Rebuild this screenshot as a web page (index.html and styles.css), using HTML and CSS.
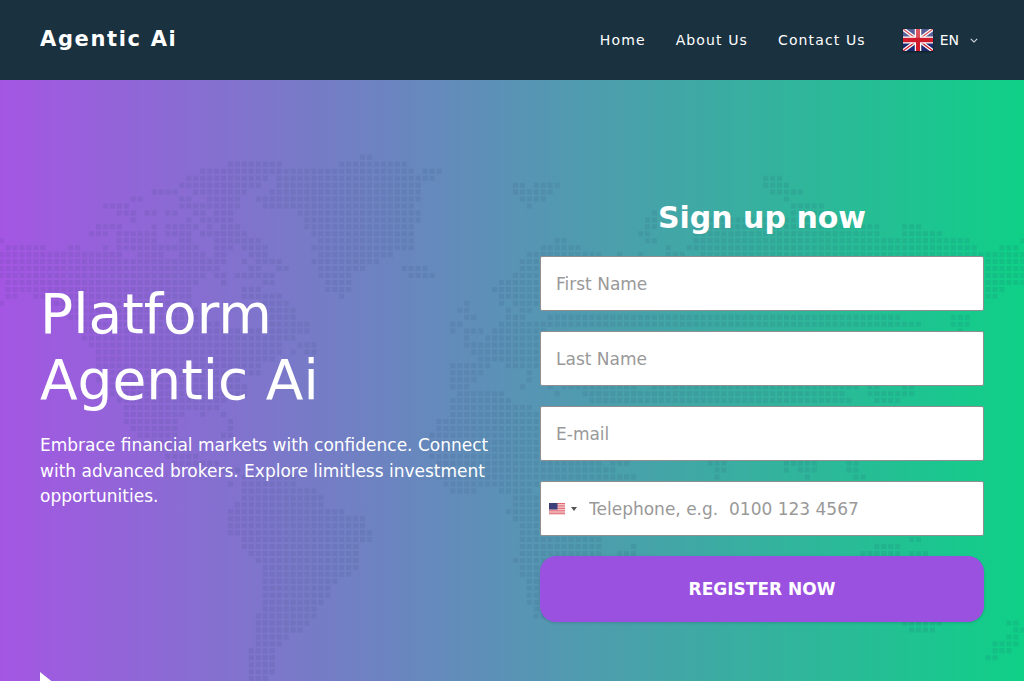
FILE: index.html
```html
<!DOCTYPE html>
<html lang="en">
<head>
<meta charset="utf-8">
<title>Agentic Ai</title>
<link rel="stylesheet" href="styles.css">
</head>
<body>
<header class="topbar">
  <a class="logo" href="#">Agentic Ai</a>
  <nav class="nav">
    <a href="#">Home</a>
    <a href="#">About Us</a>
    <a href="#">Contact Us</a>
    <div class="lang">
      <svg class="flag-uk" viewBox="0 0 60 40" preserveAspectRatio="none">
        <rect width="60" height="40" fill="#1c2a73"/>
        <path d="M0 0L60 40M60 0L0 40" stroke="#fff" stroke-width="7"/>
        <path d="M0 0L60 40M60 0L0 40" stroke="#cf1b2b" stroke-width="2.5"/>
        <path d="M30 0V40M0 20H60" stroke="#fff" stroke-width="13"/>
        <path d="M30 0V40M0 20H60" stroke="#cf1b2b" stroke-width="8"/>
        <rect class="flag-sheen" width="60" height="16"/>
      </svg>
      <span>EN</span>
      <svg class="chev" viewBox="0 0 10 6"><path d="M1 1l4 4 4-4"/></svg>
    </div>
  </nav>
</header>
<main class="hero">
  <svg class="map" viewBox="0 0 1024 601" aria-hidden="true">
    <path transform="translate(5.6 84.3) scale(6.95)" d="
M51 -1h2
M32 0h8M48 0h10
M28 1h31M60 1h3
M26 2h12M39 2h23M109 2h3
M25 3h12M39 3h21M73 3h2M76 3h4M109 3h4
M21 4h4M27 4h8M38 4h22M73 4h6M110 4h5
M18 5h2M25 5h2M29 5h5M36 5h24M74 5h4M112 5h1
M14 6h4M25 6h9M37 6h22M75 6h1M113 6h5
M16 7h3M20 7h2M23 7h2M27 7h2M30 7h3M42 7h18M93 7h1M113 7h6
M18 8h1M26 8h1M28 8h5M43 8h17M92 8h2M100 8h22
M13 9h4M21 9h1M23 9h5M29 9h1M31 9h3M43 9h16M92 9h2M99 9h27M129 9h3
M12 10h3M16 10h6M23 10h4M28 10h7M44 10h15M91 10h2M99 10h27M129 10h6
M-1 11h1M16 11h6M25 11h2M30 11h7M45 11h14M79 11h2M92 11h2M99 11h40M146 11h1
M0 12h6M9 12h2M14 12h1M16 12h12M30 12h3M34 12h4M44 12h15M77 12h6M95 12h1M98 12h42M143 12h3
M-1 13h18M19 13h4M25 13h4M30 13h2M35 13h3M45 13h11M75 13h11M88 13h1M91 13h1M95 13h3M100 13h47
M-1 14h33M34 14h1M36 14h4M44 14h10M74 14h73
M-1 15h32M35 15h2M39 15h2M45 15h7M57 15h4M74 15h73
M-1 16h30M30 16h2M33 16h6M45 16h5M58 16h4M73 16h74
M0 17h28M31 17h1M37 17h2M46 17h4M71 17h76
M0 18h27M34 18h3M46 18h4M70 18h74
M0 19h2M4 19h23M34 19h6M48 19h1M71 19h72
M-1 20h1M6 20h21M37 20h4M66 20h1M71 20h1M73 20h4
M8 21h20M37 21h5M65 21h2M72 21h1M74 21h2
M9 22h20M37 22h5M66 22h2M72 22h3M78 22h51M136 22h3
M11 23h20M37 23h7M64 23h2M71 23h61M136 23h3
M11 24h33M64 24h1M66 24h3M70 24h8M137 24h1
M11 25h31M66 25h1M69 25h9
M12 26h28M42 26h3M66 26h12
M13 27h27M41 27h1M43 27h2M67 27h11
M13 28h26M68 28h10
M13 29h24M64 29h6M72 29h5
M13 30h24M64 30h5M75 30h1
M13 31h21M64 31h4M75 31h1
M14 32h21M64 32h3M74 32h1M78 32h1M80 32h11M93 32h30M124 32h2M129 32h2
M15 33h20M65 33h7M79 33h1M83 33h38M124 33h7
M16 34h16M64 34h9M84 34h38M125 34h4
M17 35h14M64 35h12
M17 36h9M28 36h1M31 36h1M64 36h14
M17 37h8M32 37h1M62 37h16
M18 38h7M32 38h1M62 38h16
M19 39h6M31 39h2M61 39h17
M21 40h5M61 40h17
M22 41h5M61 41h17
M23 42h5M61 42h17
M24 43h7M62 43h24M87 43h3M101 43h3M112 43h5M121 43h2
M28 44h6M62 44h26M102 44h2M112 44h1M114 44h3M121 44h2
M34 45h8M62 45h29M102 45h1M115 45h1M122 45h2
M32 46h1M34 46h8M63 46h15
M34 47h11M64 47h4M71 47h5
M34 48h12M73 48h5
M33 49h13M73 49h5
M32 50h17M72 50h6
M32 51h20M73 51h5
M32 52h20M74 52h4
M32 53h21M74 53h4
M34 54h19M74 54h12M130 54h2
M34 55h17M74 55h12M90 55h1M125 55h4
M35 56h16M74 56h12M88 56h3M123 56h6M130 56h3
M36 57h15M73 57h5
M37 58h14M74 58h4
M37 59h13M74 59h4
M37 60h11M75 60h3
M37 61h10M75 61h3
M37 62h10M75 62h3
M37 63h9M75 63h3
M37 64h8M76 64h2
M36 65h9M76 65h2
M36 66h8M129 66h6M144 66h2
M36 67h7M130 67h4M145 67h2
M36 68h5M144 68h2
M36 69h4M142 69h4
M35 70h4M142 70h3
M35 71h4M141 71h2
M35 72h4
M35 73h4
M35 74h3"/>
  </svg>
  <section class="intro">
    <h1>Platform<br>Agentic Ai</h1>
    <p>Embrace financial markets with confidence. Connect with advanced brokers. Explore limitless investment opportunities.</p>
  </section>
  <form class="signup">
    <h2>Sign up now</h2>
    <input class="field" type="text" placeholder="First Name">
    <input class="field" type="text" placeholder="Last Name">
    <input class="field" type="email" placeholder="E-mail">
    <div class="field phone">
      <svg class="flag-us" viewBox="0 0 16 12">
        <rect width="16" height="12" fill="#fbecec"/>
        <path d="M0 .5H16M0 2.2H16M0 3.9H16M0 5.6H16M0 7.3H16M0 9H16M0 10.7H16" stroke="#dc4f5c" stroke-width=".85"/>
        <rect width="8.5" height="6.5" fill="#3c3f7a"/>
      </svg>
      <span class="caret"></span>
      <input type="tel" placeholder="Telephone, e.g.  0100 123 4567">
    </div>
    <button type="button">REGISTER NOW</button>
  </form>
  <span class="pointer"></span>
</main>
</body>
</html>
```
FILE: styles.css
```css
* { box-sizing: border-box; }
html, body { margin: 0; height: 681px; overflow: hidden; }
body { font-family: "DejaVu Sans", sans-serif; color: #fff; }
a { color: inherit; text-decoration: none; }

.topbar {
  height: 80px;
  background: #1a3140;
  display: flex;
  align-items: center;
  justify-content: space-between;
  padding: 0 46px 0 40px;
}
.logo { font-size: 21px; font-weight: 700; letter-spacing: 1.65px; margin-top: -3px; }
.nav { display: flex; align-items: center; gap: 30px; font-size: 14px; letter-spacing: 1.12px; }
.lang { display: flex; align-items: center; margin-left: 7px; letter-spacing: 0; }
.flag-uk { width: 30px; height: 22px; margin-right: 7px; box-shadow: 0 1px 2px rgba(0,0,0,.4); }
.flag-sheen { fill: #fff; opacity: .25; }
.chev { width: 8px; height: 5px; margin-left: 11px; fill: none; stroke: #dfe4e8; stroke-width: 1.3; }

.hero {
  position: relative;
  height: 601px;
  overflow: hidden;
  background: linear-gradient(to right, #a456e3, #0fd087);
  display: grid;
  grid-template-columns: 460px 444px;
  justify-content: space-between;
  padding: 0 40px;
}
.map { position: absolute; left: 0; top: 0; width: 1024px; height: 601px; }
.map path { fill: none; stroke: rgba(35, 50, 100, .09); stroke-width: .72; stroke-dasharray: .72 .28; }

.intro { position: relative; padding-top: 201px; }
.intro h1 { margin: 0; font-size: 55px; font-weight: 400; line-height: 66px; }
.intro p { margin: 20px 0 0; font-size: 17px; line-height: 25.5px; }

.signup { position: relative; display: flex; flex-direction: column; padding-top: 119px; }
.signup h2 { margin: 0 0 19px; font-size: 30px; line-height: 38px; font-weight: 700; text-align: center; }
.field {
  height: 55px;
  margin-bottom: 20px;
  padding: 0 15px;
  border: 1px solid #8f8f8f;
  border-radius: 2px;
  background: #fff;
  font: 17px "DejaVu Sans", sans-serif;
  color: #333;
  outline: none;
}
input::placeholder { color: #999; opacity: 1; }
.phone { display: flex; align-items: center; padding: 0 0 0 8px; }
.phone input { flex: 1; min-width: 0; border: 0; padding: 0; outline: none; font: inherit; white-space: pre; margin-left: 12px; }
.flag-us { width: 16px; height: 12px; }
.caret { width: 0; height: 0; margin-left: 6px; border: 3px solid transparent; border-top: 4px solid #555; border-bottom: 0; }
button {
  height: 66px;
  border: 0;
  border-radius: 16px;
  background: #9b51e0;
  color: #fff;
  font: 700 17px "DejaVu Sans", sans-serif;
  box-shadow: 0 1px 3px rgba(0,0,0,.15);
}
.pointer {
  position: absolute;
  left: 40px;
  top: 592px;
  width: 0;
  height: 0;
  border-left: 15px solid #fff;
  border-top: 12px solid transparent;
  border-bottom: 12px solid transparent;
}
```
